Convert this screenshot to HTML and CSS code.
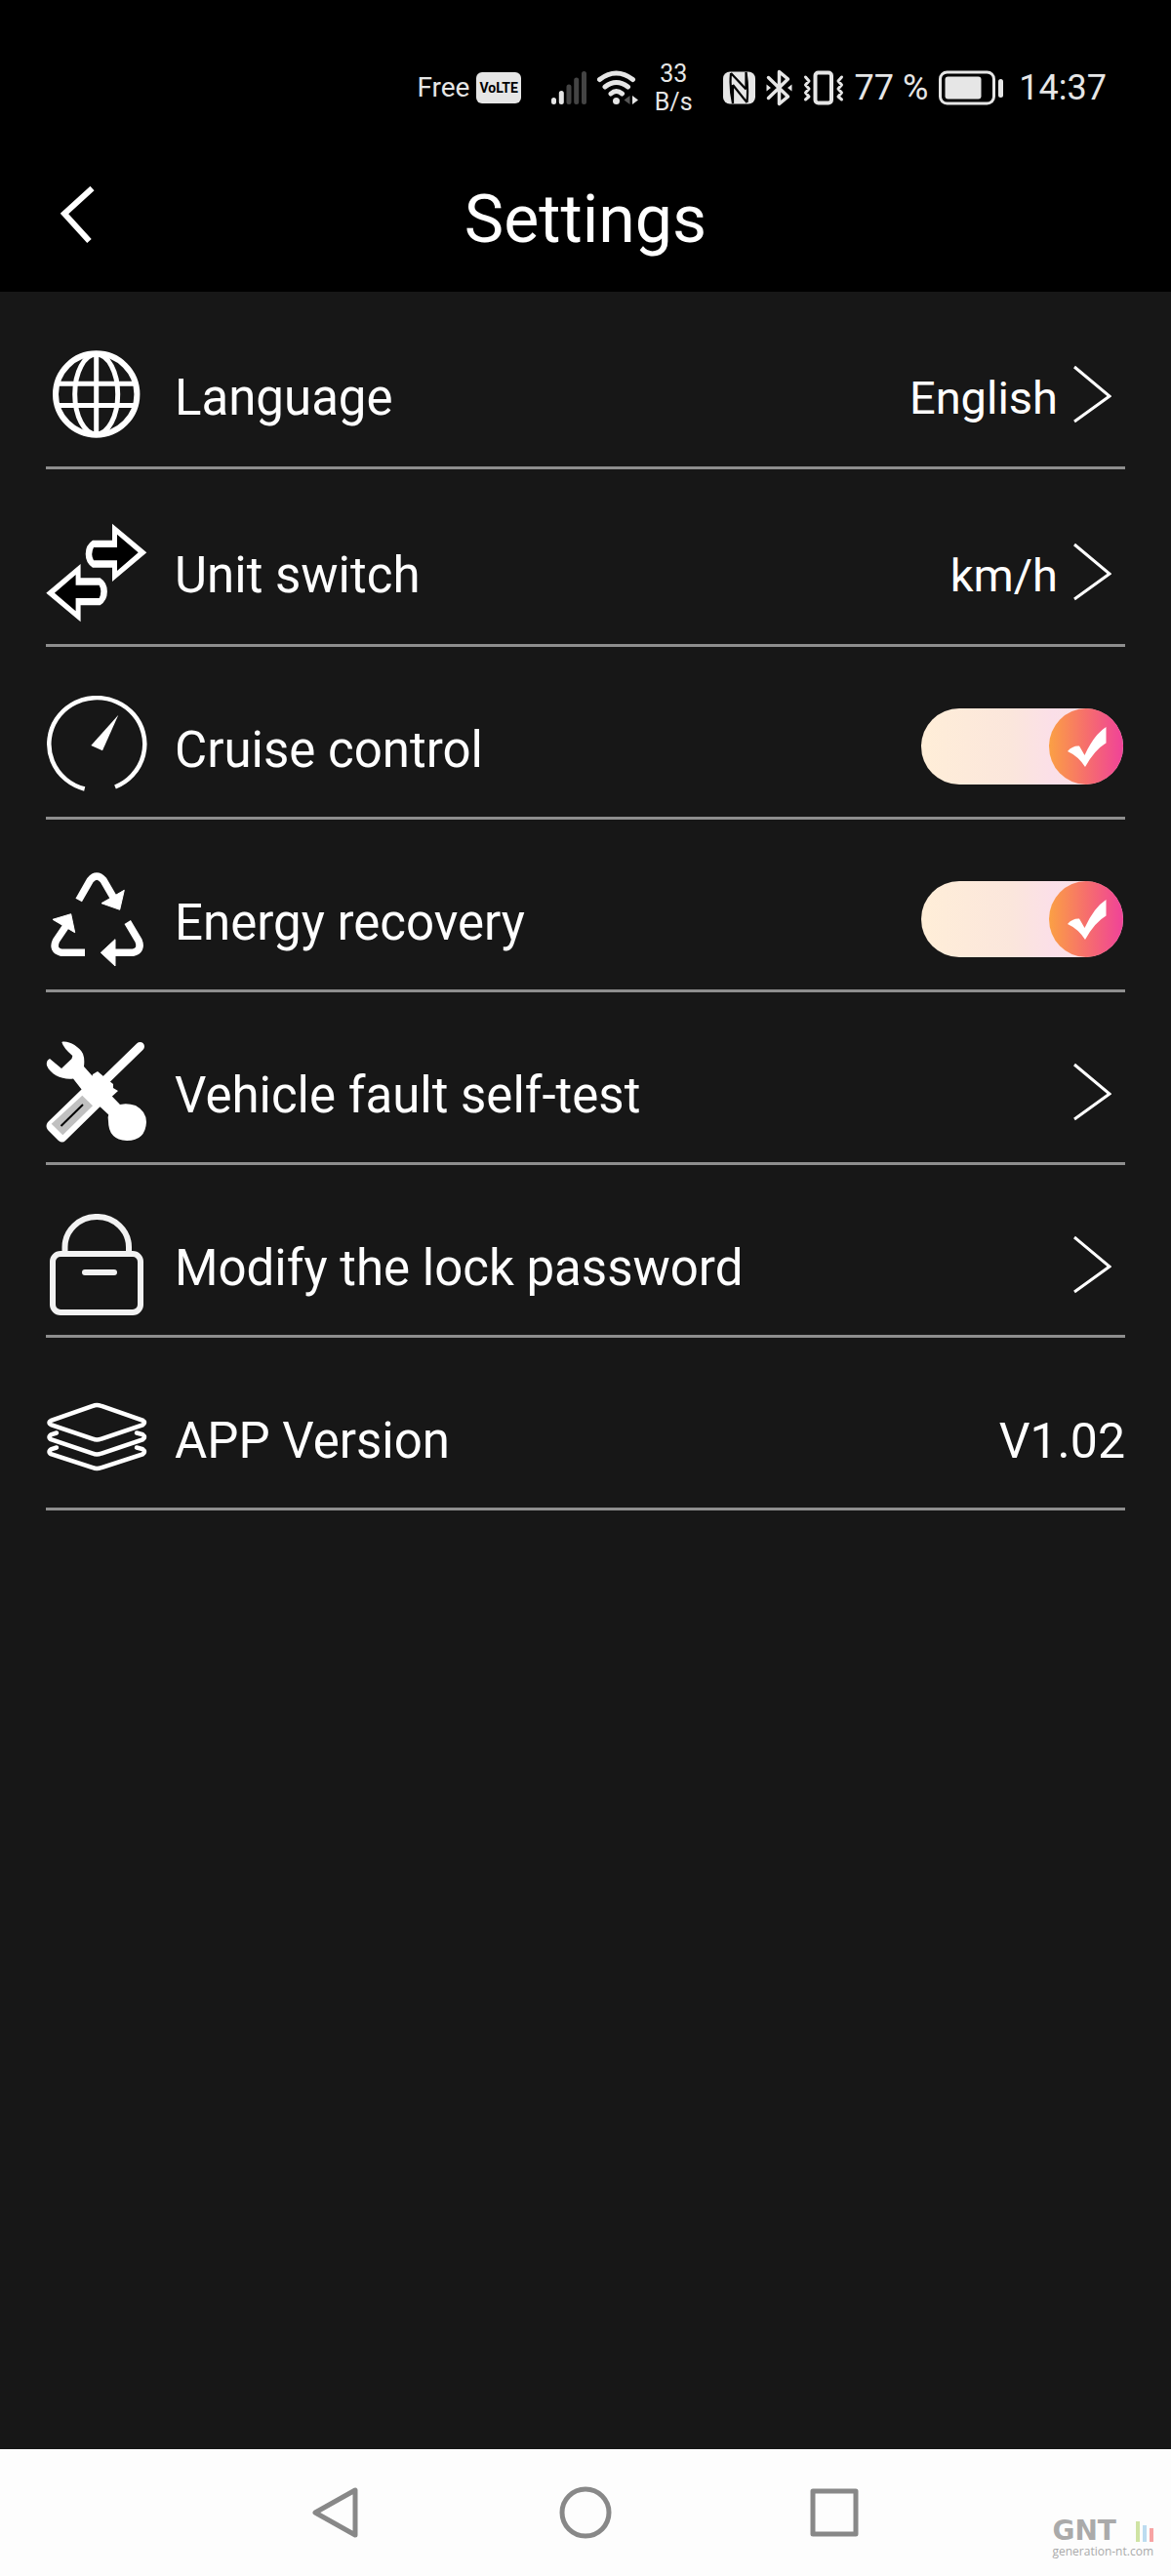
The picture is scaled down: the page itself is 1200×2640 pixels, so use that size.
FILE: index.html
```html
<!DOCTYPE html>
<html lang="en">
  <head>
    <meta charset="UTF-8">
    <meta name="viewport" content="width=device-width, initial-scale=1">
    <title>Settings</title>
    <link rel="stylesheet" href="styles.css">
  </head>
  <body>
    <div class="status-bar">
      <div class="carrier">
        <span>Free</span>
        <span class="volte">VoLTE</span>
      </div>
      <div class="network">
        <svg width="36" height="36" viewBox="0 0 36 36" fill="none" stroke-width="5" stroke-linecap="round">
          <path d="M2.5 30.5v2M10.300 23.500v9" stroke="#e6e6e6"/>
          <path d="M18 17v15.500M25.700 10v22.500M33.500 3.500v29" stroke="#444"/>
        </svg>
        <svg width="42" height="36" viewBox="0 0 42 36" fill="none" stroke="#e6e6e6" stroke-width="5" stroke-linecap="round">
          <path d="M2.500 9.500Q19.500-3.500 36.500 9.500M8 17Q19.500 8 31.500 17M14 24Q19.500 19 25.500 24"/>
          <circle cx="19.500" cy="31.500" r="3.500" fill="#e6e6e6" stroke="none"/>
          <path d="M33.500 26v9l-6-4.500z" fill="#555" stroke="none"/>
          <path d="M36 26v9l6-4.500z" fill="#e6e6e6" stroke="none"/>
        </svg>
      </div>
      <div class="speed"><span>33</span><span>B/s</span></div>
      <div class="indicators">
        <svg width="33" height="34" viewBox="0 0 33 34">
          <rect y="0.500" width="33" height="33" rx="7" fill="#e6e6e6"/>
          <path d="M8 2Q6.500 17 10 33M23.500 1Q26 17 24.500 32M8 2L23.500 18.500M10 14L24.500 32M10 14V33M23.500 1V18.500" fill="none" stroke="#000" stroke-width="2.200"/>
        </svg>
        <svg width="27" height="38" viewBox="0 0 27 38" fill="none" stroke="#e6e6e6" stroke-width="3.500" stroke-linejoin="round" stroke-linecap="round">
          <path d="M2.500 8.500L22.500 28L13.500 35.500V2.500L22.500 10L2.500 29.500"/>
          <path d="M0.500 15.500l4.500 3.500-4.500 3.500zM26.500 15.500L22 19l4.500 3.500z" fill="#e6e6e6" stroke="none"/>
        </svg>
        <svg width="42" height="36" viewBox="0 0 42 36" fill="none" stroke="#e6e6e6" stroke-linejoin="round" stroke-linecap="round">
          <rect x="12.500" y="2.500" width="16.500" height="31" rx="3" stroke-width="4"/>
          <path d="M2.500 7l3.500 4-3.500 4 3.500 4-3.500 4 3.500 4-3.500 3M39.500 7L36 11l3.500 4-3.500 4 3.500 4-3.500 4 3.500 3" stroke-width="3"/>
        </svg>
        <span class="big">77 %</span>
        <svg width="66" height="36" viewBox="0 0 66 36" fill="none">
          <rect x="1.500" y="2" width="55" height="32" rx="7" stroke="#e6e6e6" stroke-width="3"/>
          <rect x="6.500" y="6.500" width="37" height="23" rx="3" fill="#e6e6e6"/>
          <rect x="61" y="9" width="5" height="19" rx="2.500" fill="#e6e6e6"/>
        </svg>
      </div>
      <span class="big">14:37</span>
    </div>

    <header class="title-bar">
      <button class="back" type="button" aria-label="Back">
        <svg width="36" height="60" viewBox="0 0 36 60" fill="none" stroke="#fff" stroke-width="6">
          <path d="M32.500 2L4 28L29.500 56"/>
        </svg>
      </button>
      <h1>Settings</h1>
    </header>

    <main class="settings">
      <button class="row tall" type="button">
        <svg class="icon" viewBox="0 0 104 104" fill="none" stroke="#fff" stroke-width="5">
          <circle cx="51.700" cy="52" r="41.700" stroke-width="6"/>
          <ellipse cx="51.700" cy="52" rx="22" ry="41"/>
          <path d="M51.700 10v84M12 41.200h80M12 63.500h80"/>
        </svg>
        <span class="name">Language</span>
        <span class="value">English</span>
        <svg class="chevron" viewBox="0 0 40 60"><path d="M2 2L38 32L2 58"/></svg>
      </button>

      <button class="row tall" type="button">
        <svg class="icon" viewBox="0 0 104 104">
          <g id="arrow">
            <path d="M68 2.700L103.300 32.300L68 62V47.700H48Q40.700 43 40.700 33.700T48 19.700H68z" fill="#fff"/>
            <path d="M73 13.700L94.700 32.300L73 51V40.300H49Q45.500 34 49 27H73z" fill="#000"/>
          </g>
          <use href="#arrow" transform="rotate(180 51.800 53)"/>
        </svg>
        <span class="name">Unit switch</span>
        <span class="value">km/h</span>
        <svg class="chevron" viewBox="0 0 40 60"><path d="M2 2L38 32L2 58"/></svg>
      </button>

      <label class="row">
        <svg class="icon" viewBox="0 0 104 104">
          <path d="M39.700 95.500A49 47.500 0 1 1 71 93.500" fill="none" stroke="#fff" stroke-width="4.500"/>
          <path d="M74.300 19.700L46.300 51L58 56.300z" fill="#fff"/>
        </svg>
        <span class="name">Cruise control</span>
        <span class="switch">
          <input type="checkbox" checked>
          <svg viewBox="0 0 40 42"><path d="M0 26Q5 20 12 20.500L17.500 30Q27 9 39.500 1V17.500Q28 24 18 42Q11 31 0 26z"/></svg>
        </span>
      </label>

      <label class="row">
        <svg class="icon" viewBox="0 0 104 104">
          <path d="M33.700 32.500L45.500 12Q52 4 59 12L70 31M22 57L10.500 74Q6 84 16 86.300H40M83.700 55L95 74Q99 84 89 86.300H68" fill="none" stroke="#fff" stroke-width="7.500"/>
          <path d="M80.300 22.300L75.700 42.300L57 35.700zM7 52.300L25.700 46.700L29.700 65.700zM56.300 86.300L71 72.700V100z" fill="#fff" stroke="#fff" stroke-linejoin="round"/>
        </svg>
        <span class="name">Energy recovery</span>
        <span class="switch">
          <input type="checkbox" checked>
          <svg viewBox="0 0 40 42"><path d="M0 26Q5 20 12 20.500L17.500 30Q27 9 39.500 1V17.500Q28 24 18 42Q11 31 0 26z"/></svg>
        </span>
      </label>

      <a class="row" href="#self-test">
        <svg class="icon" viewBox="0 0 104 104" fill="#fff">
          <path d="M16.300 1C22 -1 34 5 38 13Q40 18 39 26L47 35L76 65L66 77L37 50L28 38.500C18 40 5 35 1 25Q0 20 4 18L16 28L26.500 18L27.300 15Q18 7 16.300 1z"/>
          <path d="M70 67Q80 62 92 66Q103 72 103 83Q102 102 83 102Q64 101 64 82Q62 74 70 67z"/>
          <path d="M96.500 5.500L60 41" stroke="#fff" stroke-width="9" stroke-linecap="round"/>
          <path d="M36 50L46 40L48 34L53 31L59 36L69 44V48L74 51L63 61L60 64L54.700 68L20 102Q17 105 13 102L2 91Q-1 87 2 83z"/>
          <path d="M37.300 55.700L48 66.300L17.300 96.300L5.700 84.700z" fill="#c0c0c0"/>
          <path d="M15.500 87L38 65" stroke="#000" stroke-width="2"/>
        </svg>
        <span class="name">Vehicle fault self-test</span>
        <svg class="chevron" viewBox="0 0 40 60"><path d="M2 2L38 32L2 58"/></svg>
      </a>

      <a class="row" href="#lock-password">
        <svg class="icon" viewBox="0 0 104 104" fill="none" stroke="#f2f2f2" stroke-width="6">
          <path d="M19.500 41V34A32.700 31 0 0 1 85 34V41"/>
          <rect x="7" y="41" width="90" height="60" rx="8"/>
          <path d="M40 60h30" stroke-linecap="round"/>
        </svg>
        <span class="name">Modify the lock password</span>
        <svg class="chevron" viewBox="0 0 40 60"><path d="M2 2L38 32L2 58"/></svg>
      </a>

      <div class="row">
        <svg class="icon" viewBox="0 0 104 104" fill="none" stroke="#fff" stroke-width="4.500" stroke-linecap="round">
          <path d="M48 20Q52 18 57 20L99 34.500Q103 37 99 39.500L57 53.500Q52 55.500 48 53.500L6 39.500Q1 37 6 34.500z"/>
          <path d="M11 47.500L6 49Q1 52 6 54.500L48 68.500Q52 70.500 57 68.500L99 54.500Q103 52 99 49L93 47.500"/>
          <path d="M11 62.500L6 64Q1 67 6 69.500L48 83Q52 85 57 83L99 69.500Q103 67 99 64L93 62.500"/>
        </svg>
        <span class="name">APP Version</span>
        <span class="value version">V1.02</span>
      </div>
    </main>

    <nav class="nav-bar">
      <button type="button" aria-label="Back">
        <svg viewBox="0 0 54 54"><path d="M46 4V50L5 27z"/></svg>
      </button>
      <button type="button" aria-label="Home">
        <svg viewBox="0 0 54 54"><circle cx="27" cy="27" r="24"/></svg>
      </button>
      <button type="button" aria-label="Recent apps">
        <svg viewBox="0 0 54 54"><rect x="5" y="5" width="44" height="44"/></svg>
      </button>
      <div class="watermark">
        <div class="brand">
          <span>GNT</span>
          <svg width="18" height="22" viewBox="0 0 18 22">
            <path d="M0 1h4v21H0z" fill="#cfe3a4"/>
            <path d="M7 5h4v17H7z" fill="#bcdcf0"/>
            <path d="M14 8h4v14h-4z" fill="#f7a3a3"/>
          </svg>
        </div>
        <span class="site">generation-nt.com</span>
      </div>
    </nav>
  </body>
</html>
```
FILE: styles.css
```css
* {
  box-sizing: border-box;
}

body {
  margin: 0;
  min-height: 100vh;
  display: flex;
  flex-direction: column;
  background: #171717;
  color: #fff;
  font-family: Roboto, "Liberation Sans", sans-serif;
}

button {
  border: 0;
  padding: 0;
  background: none;
  color: inherit;
  font: inherit;
  text-align: left;
}

svg {
  display: block;
  flex-shrink: 0;
}

/* phone status bar */
.status-bar {
  display: flex;
  justify-content: flex-end;
  align-items: center;
  height: 151px;
  padding: 28px 66px 0 20px;
  background: #000;
  color: #e6e6e6;
}

.carrier,
.network,
.indicators {
  display: flex;
  align-items: center;
}

.carrier {
  gap: 7px;
  margin-right: 31px;
  font-size: 28px;
}

.volte {
  padding: 0 3px;
  border-radius: 6px;
  background: #e6e6e6;
  color: #000;
  font-family: "Liberation Sans Narrow", Roboto, sans-serif;
  font-size: 14px;
  font-weight: bold;
  line-height: 32px;
}

.network {
  gap: 11px;
  margin-right: 17px;
}

.speed {
  display: flex;
  flex-direction: column;
  align-items: center;
  margin-right: 31px;
  font-size: 25px;
  line-height: 29px;
}

.indicators {
  gap: 11px;
  margin-right: 16px;
}

.big {
  font-size: 36px;
}

/* title */
.title-bar {
  display: grid;
  grid-template-columns: 1fr auto 1fr;
  align-items: center;
  height: 148px;
  padding: 0 62px;
  background: #000;
}

.back {
  justify-self: start;
  padding-bottom: 8px;
}

h1 {
  margin: 0;
  font-size: 68px;
  font-weight: 400;
}

/* list */
.settings {
  flex: 1;
  padding: 0 47px;
}

.row {
  display: flex;
  align-items: center;
  width: 100%;
  padding: 50px 0 20px;
  border-bottom: 3px solid #8e8e8e;
  color: #fff;
  text-decoration: none;
}

.tall {
  padding: 53px 0 22px;
}

.icon {
  width: 104px;
  height: 104px;
}

.name {
  flex: 1;
  padding: 7px 0 0 28px;
  font-size: 51px;
}

.value {
  padding-top: 7px;
  font-size: 47px;
}

.version {
  font-size: 50px;
}

.chevron {
  width: 40px;
  height: 60px;
  margin: 0 14px 0 15px;
  fill: none;
  stroke: #fff;
  stroke-width: 3;
}

.switch {
  position: relative;
  width: 207px;
  height: 78px;
  margin-right: 2px;
}

.switch input {
  appearance: none;
  display: flex;
  width: 100%;
  height: 100%;
  margin: 0;
  border-radius: 39px;
  background: linear-gradient(90deg, #ffeed8, #fbe6dc 45%, #fbdfe8 65%, #f8e3e4);
}

.switch input::before {
  content: "";
  width: 76px;
  height: 78px;
  border-radius: 50%;
  background: linear-gradient(90deg, #fba044, #f66f6c 50%, #f04299);
}

.switch input:checked {
  justify-content: flex-end;
}

.switch svg {
  position: absolute;
  top: 18px;
  right: 17px;
  width: 40px;
  height: 42px;
  fill: #fff;
}

.switch input:not(:checked) + svg {
  display: none;
}

/* system navigation */
.nav-bar {
  position: relative;
  display: flex;
  justify-content: center;
  align-items: center;
  gap: 201px;
  height: 130px;
  background: #fdfdfd;
}

.nav-bar button svg {
  width: 54px;
  height: 54px;
  fill: none;
  stroke: #888;
  stroke-width: 5;
  stroke-linejoin: round;
}

.watermark {
  position: absolute;
  right: 18px;
  bottom: 18px;
  color: #aaa;
}

.brand {
  display: flex;
  justify-content: space-between;
  align-items: center;
  font-family: "DejaVu Sans", sans-serif;
  font-size: 28px;
  font-weight: bold;
  line-height: 28px;
}

.site {
  display: block;
  font-family: "Open Sans", sans-serif;
  font-size: 12px;
  line-height: 14px;
}
```
